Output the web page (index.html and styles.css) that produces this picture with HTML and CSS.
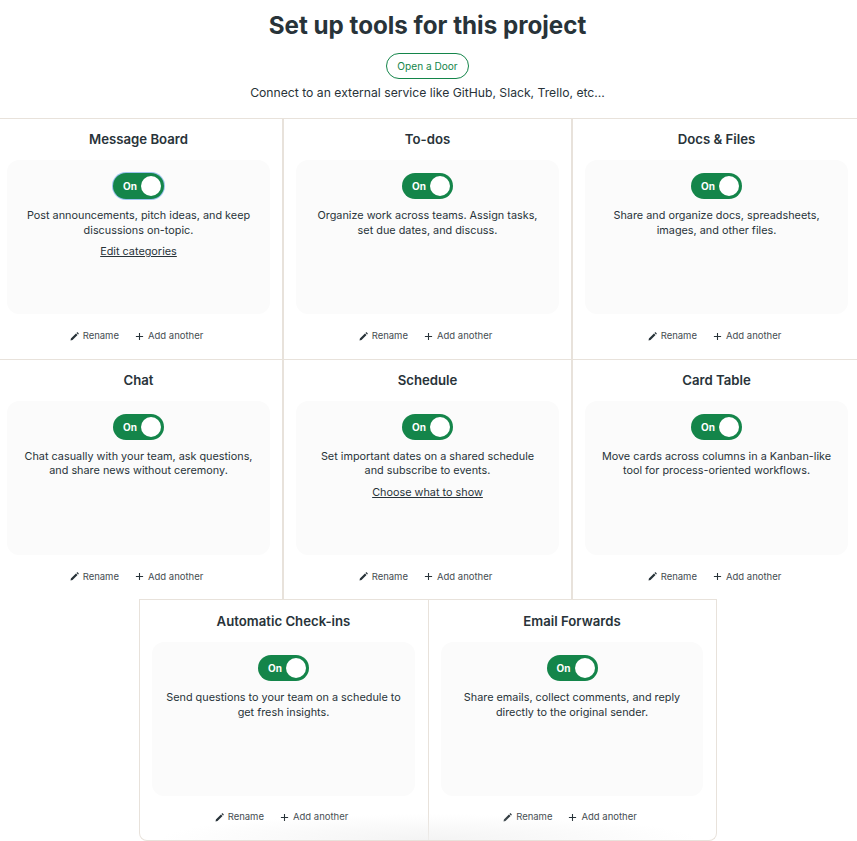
FILE: index.html
```html
<!DOCTYPE html>
<html lang="en">
<head>
  <meta charset="UTF-8" />
  <title>Set up tools for this project</title>
  <link rel="stylesheet" href="styles.css">
</head>
<body>

  <header>
    <h1>Set up tools for this project</h1>
    <a class="door-btn" href="#">Open a Door</a>
    <p>Connect to an external service like GitHub, Slack, Trello, etc…</p>
  </header>

  <section class="tools">
    <div class="tool">
      <h2>Message Board</h2>
      <div class="panel">
        <span class="toggle focused"><b>On</b><i></i></span>
        <p>Post announcements, pitch ideas, and keep discussions on-topic.</p>
        <a class="panel-link" href="#">Edit categories</a>
      </div>
      <div class="actions">
        <a href="#"><svg viewBox="0 0 10 10"><path d="M0.6 9.4 L1 7.2 L6.6 1.6 L8.4 3.4 L2.8 9 Z M7.2 1 L7.9 0.4 Q8.2 0.2 8.5 0.4 L9.6 1.5 Q9.8 1.8 9.6 2.1 L9 2.8 Z"/></svg>Rename</a>
        <a href="#"><svg viewBox="0 0 10 10"><path d="M4.4 1 H5.6 V4.4 H9 V5.6 H5.6 V9 H4.4 V5.6 H1 V4.4 H4.4 Z"/></svg>Add another</a>
      </div>
    </div>

    <div class="tool">
      <h2>To-dos</h2>
      <div class="panel">
        <span class="toggle"><b>On</b><i></i></span>
        <p>Organize work across teams. Assign tasks, set due dates, and discuss.</p>
      </div>
      <div class="actions">
        <a href="#"><svg viewBox="0 0 10 10"><path d="M0.6 9.4 L1 7.2 L6.6 1.6 L8.4 3.4 L2.8 9 Z M7.2 1 L7.9 0.4 Q8.2 0.2 8.5 0.4 L9.6 1.5 Q9.8 1.8 9.6 2.1 L9 2.8 Z"/></svg>Rename</a>
        <a href="#"><svg viewBox="0 0 10 10"><path d="M4.4 1 H5.6 V4.4 H9 V5.6 H5.6 V9 H4.4 V5.6 H1 V4.4 H4.4 Z"/></svg>Add another</a>
      </div>
    </div>

    <div class="tool">
      <h2>Docs &amp; Files</h2>
      <div class="panel">
        <span class="toggle"><b>On</b><i></i></span>
        <p>Share and organize docs, spreadsheets, images, and other files.</p>
      </div>
      <div class="actions">
        <a href="#"><svg viewBox="0 0 10 10"><path d="M0.6 9.4 L1 7.2 L6.6 1.6 L8.4 3.4 L2.8 9 Z M7.2 1 L7.9 0.4 Q8.2 0.2 8.5 0.4 L9.6 1.5 Q9.8 1.8 9.6 2.1 L9 2.8 Z"/></svg>Rename</a>
        <a href="#"><svg viewBox="0 0 10 10"><path d="M4.4 1 H5.6 V4.4 H9 V5.6 H5.6 V9 H4.4 V5.6 H1 V4.4 H4.4 Z"/></svg>Add another</a>
      </div>
    </div>

    <div class="tool">
      <h2>Chat</h2>
      <div class="panel">
        <span class="toggle"><b>On</b><i></i></span>
        <p>Chat casually with your team, ask questions, and share news without ceremony.</p>
      </div>
      <div class="actions">
        <a href="#"><svg viewBox="0 0 10 10"><path d="M0.6 9.4 L1 7.2 L6.6 1.6 L8.4 3.4 L2.8 9 Z M7.2 1 L7.9 0.4 Q8.2 0.2 8.5 0.4 L9.6 1.5 Q9.8 1.8 9.6 2.1 L9 2.8 Z"/></svg>Rename</a>
        <a href="#"><svg viewBox="0 0 10 10"><path d="M4.4 1 H5.6 V4.4 H9 V5.6 H5.6 V9 H4.4 V5.6 H1 V4.4 H4.4 Z"/></svg>Add another</a>
      </div>
    </div>

    <div class="tool">
      <h2>Schedule</h2>
      <div class="panel">
        <span class="toggle"><b>On</b><i></i></span>
        <p>Set important dates on a shared schedule and subscribe to events.</p>
        <a class="panel-link" href="#">Choose what to show</a>
      </div>
      <div class="actions">
        <a href="#"><svg viewBox="0 0 10 10"><path d="M0.6 9.4 L1 7.2 L6.6 1.6 L8.4 3.4 L2.8 9 Z M7.2 1 L7.9 0.4 Q8.2 0.2 8.5 0.4 L9.6 1.5 Q9.8 1.8 9.6 2.1 L9 2.8 Z"/></svg>Rename</a>
        <a href="#"><svg viewBox="0 0 10 10"><path d="M4.4 1 H5.6 V4.4 H9 V5.6 H5.6 V9 H4.4 V5.6 H1 V4.4 H4.4 Z"/></svg>Add another</a>
      </div>
    </div>

    <div class="tool">
      <h2>Card Table</h2>
      <div class="panel">
        <span class="toggle"><b>On</b><i></i></span>
        <p>Move cards across columns in a Kanban-like tool for process-oriented workflows.</p>
      </div>
      <div class="actions">
        <a href="#"><svg viewBox="0 0 10 10"><path d="M0.6 9.4 L1 7.2 L6.6 1.6 L8.4 3.4 L2.8 9 Z M7.2 1 L7.9 0.4 Q8.2 0.2 8.5 0.4 L9.6 1.5 Q9.8 1.8 9.6 2.1 L9 2.8 Z"/></svg>Rename</a>
        <a href="#"><svg viewBox="0 0 10 10"><path d="M4.4 1 H5.6 V4.4 H9 V5.6 H5.6 V9 H4.4 V5.6 H1 V4.4 H4.4 Z"/></svg>Add another</a>
      </div>
    </div>

    <div class="last-row">
      <div class="tool">
        <h2>Automatic Check-ins</h2>
        <div class="panel">
          <span class="toggle"><b>On</b><i></i></span>
          <p>Send questions to your team on a schedule to get fresh insights.</p>
        </div>
        <div class="actions">
          <a href="#"><svg viewBox="0 0 10 10"><path d="M0.6 9.4 L1 7.2 L6.6 1.6 L8.4 3.4 L2.8 9 Z M7.2 1 L7.9 0.4 Q8.2 0.2 8.5 0.4 L9.6 1.5 Q9.8 1.8 9.6 2.1 L9 2.8 Z"/></svg>Rename</a>
          <a href="#"><svg viewBox="0 0 10 10"><path d="M4.4 1 H5.6 V4.4 H9 V5.6 H5.6 V9 H4.4 V5.6 H1 V4.4 H4.4 Z"/></svg>Add another</a>
        </div>
      </div>

      <div class="tool">
        <h2>Email Forwards</h2>
        <div class="panel">
          <span class="toggle"><b>On</b><i></i></span>
          <p>Share emails, collect comments, and reply directly to the original sender.</p>
        </div>
        <div class="actions">
          <a href="#"><svg viewBox="0 0 10 10"><path d="M0.6 9.4 L1 7.2 L6.6 1.6 L8.4 3.4 L2.8 9 Z M7.2 1 L7.9 0.4 Q8.2 0.2 8.5 0.4 L9.6 1.5 Q9.8 1.8 9.6 2.1 L9 2.8 Z"/></svg>Rename</a>
          <a href="#"><svg viewBox="0 0 10 10"><path d="M4.4 1 H5.6 V4.4 H9 V5.6 H5.6 V9 H4.4 V5.6 H1 V4.4 H4.4 Z"/></svg>Add another</a>
        </div>
      </div>
    </div>
  </section>

</body>
</html>
```

FILE: styles.css
```css
html, body {
  overflow: hidden;
}
body {
  margin: 0;
  height: 841px;
  font-family: Inter, 'Liberation Sans', sans-serif;
  background-color: #fff;
  color: #283339;
}
a {
  color: inherit;
}
header {
  text-align: center;
  height: 118px;
  padding: 10px 2px 0 0;
  box-sizing: border-box;
}
header h1 {
  margin: 0;
  font-size: 24.2px;
  line-height: 32px;
  font-weight: 700;
}
header p {
  margin: 5px 0 0 0;
  font-size: 12.2px;
  line-height: 18px;
}
.door-btn {
  display: inline-block;
  margin-top: 11px;
  padding: 0 10px;
  height: 24px;
  line-height: 24px;
  font-size: 10.1px;
  font-weight: 400;
  color: #14854a;
  border: 1px solid #14854a;
  border-radius: 13px;
  text-decoration: none;
}
.tools {
  display: flex;
  flex-wrap: wrap;
  width: 867px;
  margin-left: -5px;
}
.tool {
  width: 289px;
  height: 240.7px;
  box-sizing: border-box;
  padding: 0 12px;
  border-top: 1px solid #e8e2db;
  border-right: 2px solid #e8e2db;
  text-align: center;
}
.tools > .tool:nth-child(3n) {
  border-right: none;
  padding-right: 14px;
}
.tool h2 {
  margin: 0;
  height: 41px;
  line-height: 40px;
  font-size: 13.2px;
  font-weight: 600;
}
.panel {
  height: 154px;
  box-sizing: border-box;
  padding-top: 13px;
  background: #fbfbfb;
  border-radius: 12px;
}
.panel p {
  margin: 9px 13.9px 0 13.9px;
  font-size: 10.85px;
  line-height: 14.5px;
}
.panel-link {
  display: inline-block;
  margin-top: 7px;
  font-size: 10.85px;
  line-height: 14px;
}
.toggle {
  display: inline-flex;
  align-items: center;
  justify-content: space-between;
  box-sizing: border-box;
  width: 51px;
  height: 26px;
  padding: 0 3px 0 10px;
  background: #14854a;
  border-radius: 13px;
  vertical-align: top;
}
.toggle.focused {
  box-shadow: 0 0 0 1px #9cc3ee;
}
.toggle b {
  color: #fff;
  font-size: 10px;
  font-weight: 700;
}
.toggle i {
  width: 20px;
  height: 20px;
  background: #fff;
  border-radius: 50%;
}
.actions {
  display: flex;
  justify-content: center;
  gap: 16px;
  margin: 15px 4px 0 0;
  font-size: 9.5px;
  line-height: 14px;
  color: #454d52;
}
.actions a {
  display: flex;
  align-items: center;
  gap: 4px;
  text-decoration: none;
}
.actions svg {
  width: 9px;
  height: 9px;
  fill: #283339;
}
.last-row {
  display: flex;
  position: relative;
  box-sizing: border-box;
  width: 578px;
  height: 241.5px;
  margin-left: 144px;
  border-bottom: 1px solid #e8e2db;
  border-left: 1px solid #e8e2db;
  border-right: 1px solid #e8e2db;
  border-radius: 0 0 8px 8px;
}
/* soft fade at the bottom edge of the window */
.last-row::after {
  content: "";
  position: absolute;
  left: 20px;
  right: 20px;
  bottom: 0;
  height: 26px;
  background: radial-gradient(ellipse 50% 100% at 50% 100%, rgba(240, 240, 240, 0.75), rgba(245, 245, 245, 0));
}
.last-row .tool {
  border-right: 1px solid #e8e2db;
  padding-right: 13px;
}
.last-row .tool:last-child {
  flex: 1;
  border-right: none;
  padding-right: 13px;
}
.last-row .panel p {
  margin-left: 13px;
  margin-right: 13px;
}
.last-row h2 {
  height: 42px;
  line-height: 42px;
}
.last-row .actions {
  margin-top: 14px;
}
```
